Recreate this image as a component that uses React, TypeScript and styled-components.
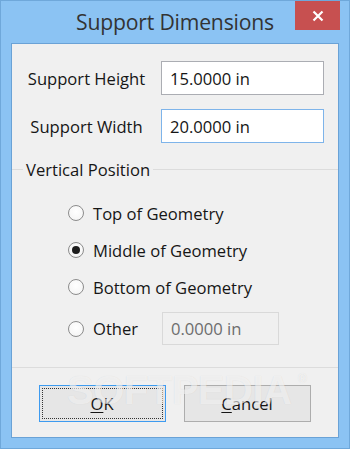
import React from "react";
import styled, { createGlobalStyle } from "styled-components";

const Global = createGlobalStyle`
  html, body { margin: 0; padding: 0; background: #8bc3f3; }
  body { font-family: "Open Sans", "Noto Sans", "Liberation Sans", sans-serif; }
  * { box-sizing: border-box; }
`;

const Window = styled.div`
  width: 350px;
  height: 449px;
  border: 1px solid #6fa8da;
  background: #8bc3f3;
  display: flex;
  flex-direction: column;
  padding: 0 10px 10px 10px;
`;

const TitleBar = styled.div`
  height: 42px;
  display: grid;
  grid-template-columns: 1fr auto 1fr;
  align-items: start;
  margin: 0 -1px 0 -1px;
`;

const Title = styled.div`
  grid-column: 2;
  font-size: 21.2px;
  line-height: 42px;
  color: #333;
  letter-spacing: -0.2px;
`;

const CloseButton = styled.div`
  grid-column: 3;
  justify-self: end;
  width: 45px;
  height: 29px;
  background: #c75050;
  display: flex;
  align-items: center;
  justify-content: center;
`;

const Client = styled.div`
  flex: 1;
  position: relative;
  border: 1px solid #6aa2d6;
  background: #f0f0f0;
  display: flex;
  flex-direction: column;
  padding-top: 17px;
  &::after {
    content: "SOFTPEDIA";
    position: absolute;
    left: 55px;
    top: 324px;
    font-family: "Liberation Sans", Arial, sans-serif;
    font-weight: bold;
    font-size: 40px;
    letter-spacing: -0.5px;
    color: rgba(255, 255, 255, 0.6);
    text-shadow: 0 0 1px rgba(0, 0, 0, 0.1);
    pointer-events: none;
  }
  &::before {
    content: "®";
    position: absolute;
    left: 286px;
    top: 328px;
    font-family: "Liberation Sans", Arial, sans-serif;
    font-size: 12px;
    color: rgba(255, 255, 255, 0.7);
    text-shadow: 0 0 1px rgba(0, 0, 0, 0.12);
    pointer-events: none;
    z-index: 1;
  }
`;

const FieldGrid = styled.div`
  display: grid;
  grid-template-columns: 149px 163px;
  row-gap: 14px;
  align-items: center;
`;

const FieldLabel = styled.label`
  text-align: center;
  font-size: 16.6px;
  color: #161616;
  white-space: nowrap;
`;

const TextBox = styled.div<{ $focused?: boolean; $disabled?: boolean; $h?: number }>`
  height: ${(p) => p.$h ?? 34}px;
  border: 1px solid ${(p) => (p.$focused ? "#7eb4ea" : p.$disabled ? "#d9d9d9" : "#abadb3")};
  background: ${(p) => (p.$disabled ? "#f0f0f0" : "#ffffff")};
  color: ${(p) => (p.$disabled ? "#6d6d6d" : "#161616")};
  font-size: 16.6px;
  display: flex;
  align-items: center;
  padding-left: 8px;
  white-space: nowrap;
`;

const Group = styled.div`
  margin-top: 16px;
  border-bottom: 1px solid #dcdcdc;
  padding-bottom: 22px;
`;

const GroupHeader = styled.div`
  height: 20px;
  display: flex;
  align-items: center;
  font-size: 16.6px;
  color: #161616;
  &::before {
    content: "";
    width: 11px;
    height: 1px;
    background: #dcdcdc;
    margin-right: 3px;
  }
  &::after {
    content: "";
    flex: 1;
    height: 1px;
    background: #dcdcdc;
    margin-left: 3px;
  }
`;

const RadioList = styled.div`
  margin-top: 22px;
  padding-left: 56px;
  display: flex;
  flex-direction: column;
  gap: 13px;
`;

const RadioRow = styled.div<{ $tall?: boolean }>`
  height: ${(p) => (p.$tall ? 33 : 24)}px;
  display: grid;
  grid-template-columns: 94px 117px;
  align-items: center;
`;

const RadioLabel = styled.div`
  display: flex;
  align-items: center;
  gap: 9px;
  font-size: 16.6px;
  color: #161616;
  white-space: nowrap;
`;

const RadioCircle = styled.span<{ $checked?: boolean }>`
  width: 16px;
  height: 16px;
  border-radius: 50%;
  border: 1px solid #8c8c8c;
  background: radial-gradient(circle at 50% 40%, #ffffff 0%, #f6f6f6 70%, #e8e8e8 100%);
  display: flex;
  align-items: center;
  justify-content: center;
  flex-shrink: 0;
  &::after {
    content: "";
    display: ${(p) => (p.$checked ? "block" : "none")};
    width: 8px;
    height: 8px;
    border-radius: 50%;
    background: #1e1e1e;
  }
`;

const ButtonRow = styled.div`
  margin-top: 17px;
  display: flex;
  justify-content: center;
  gap: 18px;
  padding-right: 1px;
`;

const Button = styled.div<{ $default?: boolean }>`
  width: 127px;
  height: 37px;
  border: 1px solid ${(p) => (p.$default ? "#3d9bf0" : "#adadad")};
  background: #e6e6e6;
  font-size: 16.6px;
  color: #161616;
  display: flex;
  align-items: center;
  justify-content: center;
  position: relative;
  ${(p) =>
    p.$default
      ? `&::before {
    content: "";
    position: absolute;
    inset: 2px;
    border: 1px dotted #333;
  }`
      : ""}
  u { text-decoration: underline; text-underline-offset: 2px; }
`;

export default function App() {
  return (
    <>
      <Global />
      <Window>
        <TitleBar>
          <Title>Support Dimensions</Title>
          <CloseButton>
            <svg width="12" height="12" viewBox="0 0 12 12">
              <path d="M1.5 1.5 L10.5 10.5 M10.5 1.5 L1.5 10.5" stroke="#fff" strokeWidth="2.2" />
            </svg>
          </CloseButton>
        </TitleBar>
        <Client>
          <FieldGrid>
            <FieldLabel>Support Height</FieldLabel>
            <TextBox>15.0000 in</TextBox>
            <FieldLabel>Support Width</FieldLabel>
            <TextBox $focused>20.0000 in</TextBox>
          </FieldGrid>
          <Group>
            <GroupHeader>Vertical Position</GroupHeader>
            <RadioList>
              <RadioRow>
                <RadioLabel><RadioCircle />Top of Geometry</RadioLabel>
              </RadioRow>
              <RadioRow>
                <RadioLabel><RadioCircle $checked />Middle of Geometry</RadioLabel>
              </RadioRow>
              <RadioRow>
                <RadioLabel><RadioCircle />Bottom of Geometry</RadioLabel>
              </RadioRow>
              <RadioRow $tall>
                <RadioLabel><RadioCircle />Other</RadioLabel>
                <TextBox $disabled $h={33}>0.0000 in</TextBox>
              </RadioRow>
            </RadioList>
          </Group>
          <ButtonRow>
            <Button $default><span><u>O</u>K</span></Button>
            <Button><span><u>C</u>ancel</span></Button>
          </ButtonRow>
        </Client>
      </Window>
    </>
  );
}
